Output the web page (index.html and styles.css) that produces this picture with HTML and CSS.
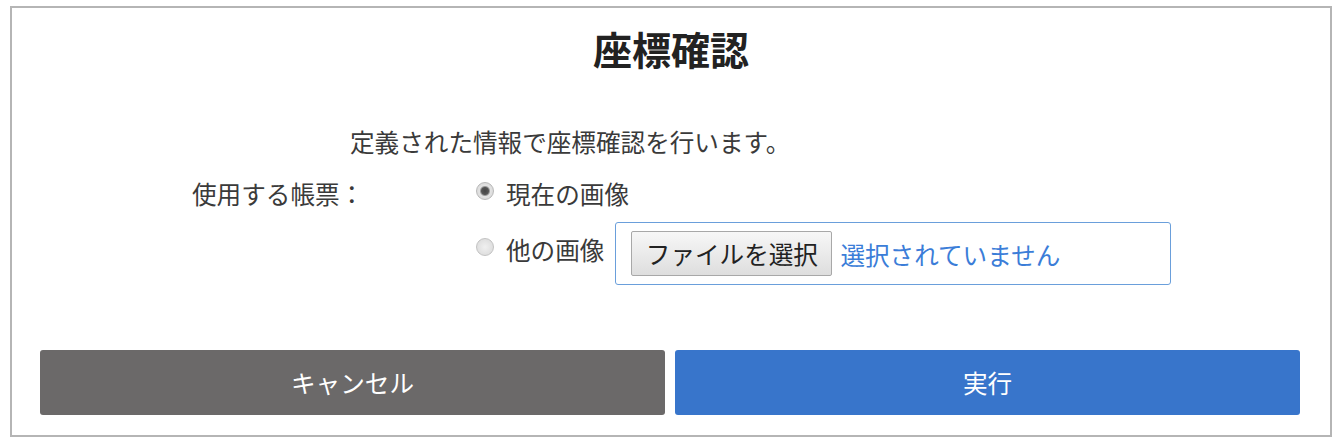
FILE: index.html
```html
<!DOCTYPE html>
<html lang="ja">
<head>
    <meta charset="UTF-8">
    <title>座標確認</title>
    <link rel="stylesheet" href="styles.css">
</head>
<body>
<div class="dialog">
    <h1 class="title">座標確認</h1>
    <p class="desc">定義された情報で座標確認を行います。</p>
    <div class="form">
        <div class="label">使用する帳票：</div>
        <label class="opt"><input type="radio" name="src" checked>現在の画像</label>
        <div></div>
        <div class="opt-row">
            <label class="opt opt-other"><input type="radio" name="src">他の画像</label>
            <div class="filebox">
                <span class="filebtn">ファイルを選択</span>
                <span class="filename">選択されていません</span>
            </div>
        </div>
    </div>
    <div class="actions">
        <a href="javascript:;" class="btn btn-cancel">キャンセル</a>
        <a href="javascript:;" class="btn btn-run">実行</a>
    </div>
</div>
</body>
</html>
```

FILE: styles.css
```css
*{margin:0;padding:0;box-sizing:border-box;}
body{background:#fff;font-family:"Noto Sans CJK JP","Noto Sans",sans-serif;color:#3a3a3a;}
a{text-decoration:none;}

.dialog{
    width:1322px;
    height:431px;
    margin:6px 0 0 10px;
    border:2px solid #b5b5b5;
}
.title{
    padding-top:15px;
    font-size:39px;
    line-height:50px;
    font-weight:bold;
    text-align:center;
    color:#222;
}
.desc{
    margin-top:50px;
    padding-left:338px;
    font-size:24.6px;
    line-height:36px;
}

.form{
    display:grid;
    grid-template-columns:284px auto;
    row-gap:11px;
    margin-top:16px;
    padding-left:180px;
    font-size:24.6px;
    line-height:36px;
}
.opt{display:flex;align-items:center;}
.opt input{
    appearance:none;
    -webkit-appearance:none;
    width:18px;
    height:18px;
    margin:0 12px 4px 0;
    border-radius:50%;
    border:1px solid #c2c2c2;
    background:radial-gradient(circle,#f0f0f0 0,#d8d8d8 100%);
}
.opt input:checked{
    border-color:#b8b8b8;
    background:radial-gradient(circle,#444 0,#555 3.5px,#9a9a9a 4.5px,#e2e2e2 5.5px,#d4d4d4 100%);
}
.opt-row{display:flex;align-items:flex-start;}
.opt-other{margin-top:9px;}
.filebox{
    display:flex;
    align-items:center;
    width:556px;
    height:63px;
    margin-left:11px;
    padding-left:15px;
    border:1px solid #6a9fdb;
    border-radius:3px;
}
.filebtn{
    width:201px;
    height:45px;
    line-height:43px;
    text-align:center;
    color:#222;
    border:1px solid #a8a8a8;
    border-radius:2px;
    background:linear-gradient(#f7f7f7,#dedede);
}
.filename{margin-left:8px;color:#3b7dd8;}

.actions{
    display:grid;
    grid-template-columns:625px 625px;
    column-gap:10px;
    margin-top:65px;
    padding-left:28px;
}
.btn{
    display:block;
    height:65px;
    line-height:65px;
    border-radius:3px;
    font-size:24.6px;
    text-align:center;
    color:#fff;
}
.btn-cancel{background:#6b6969;}
.btn-run{background:#3875cb;}
```
